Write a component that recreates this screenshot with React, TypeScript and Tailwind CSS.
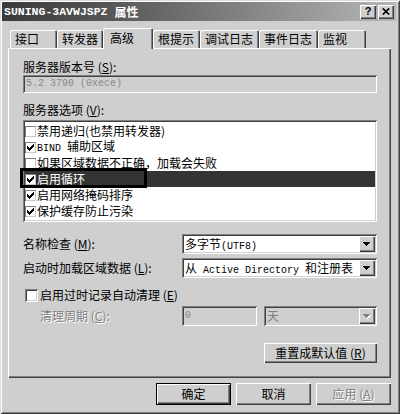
import React from "react";

const Check = () => (
  <svg width="7" height="7" viewBox="0 0 7 7" shapeRendering="crispEdges">
    <path
      fill="#000"
      d="M6 0h1v1h-1z M5 1h2v1h-2z M0 2h1v1h-1z M4 2h3v1h-3z M0 3h2v1h-2z M3 3h3v1h-3z M0 4h5v1h-5z M1 5h3v1h-3z M2 6h1v1h-1z"
    />
  </svg>
);

const Arrow = ({ disabled }: { disabled?: boolean }) => (
  <svg width="8" height="5" viewBox="0 0 8 5" shapeRendering="crispEdges">
    {disabled && <path fill="#ffffff" d="M1 1h7v1h-7z M2 2h5v1h-5z M3 3h3v1h-3z M4 4h1v1h-1z" />}
    <path
      fill={disabled ? "#808080" : "#000000"}
      d="M0 0h7v1h-7z M1 1h5v1h-5z M2 2h3v1h-3z M3 3h1v1h-1z"
    />
  </svg>
);

const Mono = ({ children }: { children: React.ReactNode }) => (
  <span className="font-['Liberation_Mono',monospace] text-[10px] leading-[12px] whitespace-pre">{children}</span>
);

const ListCheck = ({ checked }: { checked: boolean }) => (
  <div className="w-[11px] h-[11px] shrink-0 bg-white flex items-center justify-center shadow-[inset_1px_1px_0_#808080,inset_-1px_-1px_0_#c8c8c8]">
    {checked && <Check />}
  </div>
);

const DropBtn = ({ disabled }: { disabled?: boolean }) => (
  <div className="w-[16px] h-[16px] shrink-0 mr-[2px] bg-[#cfcfcf] flex items-center justify-center shadow-[inset_1px_1px_0_#ffffff,inset_-1px_-1px_0_#404040,inset_-2px_-2px_0_#808080]">
    <Arrow disabled={disabled} />
  </div>
);

const rows: { checked: boolean; label: React.ReactNode; sel?: boolean }[] = [
  { checked: false, label: "禁用递归(也禁用转发器)" },
  { checked: true, label: <><Mono>BIND </Mono>辅助区域</> },
  { checked: false, label: "如果区域数据不正确，加载会失败" },
  { checked: true, label: "启用循环", sel: true },
  { checked: true, label: "启用网络掩码排序" },
  { checked: true, label: "保护缓存防止污染" },
];

const tabs: { label: string; w: string; sel?: boolean }[] = [
  { label: "接口", w: "w-[47px]" },
  { label: "转发器", w: "w-[46px]" },
  { label: "高级", w: "w-[50px]", sel: true },
  { label: "根提示", w: "w-[47px]" },
  { label: "调试日志", w: "w-[59px]" },
  { label: "事件日志", w: "w-[59px]" },
  { label: "监视", w: "w-[48px]" },
];

export default function App() {
  return (
    <div className="w-[400px] h-[414px] bg-[#cfcfcf] flex flex-col pt-[2px] px-[2px] overflow-hidden text-[12px] text-black font-['Noto_Sans_CJK_SC',sans-serif] shadow-[inset_1px_1px_0_#dcdcdc,inset_-1px_-1px_0_#404040,inset_2px_2px_0_#ffffff,inset_-2px_-2px_0_#808080]">
      {/* Title bar */}
      <div className="h-[19px] mr-[2px] shrink-0 flex items-center pl-[2px] pr-[2px] bg-[linear-gradient(to_right,#3a3a3a,#5a5a5a_30%,#b6b6b6)]">
        <span className="text-white font-bold font-['Liberation_Mono',monospace] text-[11.5px] leading-none">SUNING-3AVWJSPZ</span>
        <span className="text-white font-bold ml-[7px] leading-none">属性</span>
        <div className="ml-auto flex items-center gap-[2px]">
          <div className="w-[16px] h-[14px] bg-[#cfcfcf] flex items-center justify-center shadow-[inset_1px_1px_0_#ffffff,inset_-1px_-1px_0_#404040,inset_-2px_-2px_0_#808080]">
            <span className="font-['Liberation_Sans',sans-serif] font-bold text-[11px] leading-none">?</span>
          </div>
          <div className="w-[16px] h-[14px] bg-[#cfcfcf] flex items-center justify-center shadow-[inset_1px_1px_0_#ffffff,inset_-1px_-1px_0_#404040,inset_-2px_-2px_0_#808080]">
            <svg width="8" height="7" viewBox="0 0 8 7">
              <path d="M0.8 0.5 L7.2 6.5 M7.2 0.5 L0.8 6.5" stroke="#000" strokeWidth="1.7" />
            </svg>
          </div>
        </div>
      </div>

      {/* Tabs */}
      <div className="h-[20px] mt-[7px] ml-[8px] flex items-end shrink-0">
        {tabs.map((t) =>
          t.sel ? (
            <div
              key={t.label}
              className={`${t.w} h-[21px] translate-y-[1px] relative z-10 bg-[#cfcfcf] rounded-t-[2px] flex items-center pl-[7px] pb-[2px] shadow-[inset_1px_1px_0_#ffffff,inset_-1px_0_0_#404040,inset_-2px_0_0_#808080]`}
            >
              {t.label}
            </div>
          ) : (
            <div
              key={t.label}
              className={`${t.w} h-[18px] bg-[#cfcfcf] rounded-t-[2px] flex items-center pl-[5px] shadow-[inset_1px_1px_0_#ffffff,inset_-1px_0_0_#404040,inset_-2px_0_0_#808080]`}
            >
              {t.label}
            </div>
          )
        )}
      </div>

      {/* Panel */}
      <div className="ml-[6px] w-[383px] h-[330px] shrink-0 flex flex-col pl-[15px] pr-[14px] shadow-[inset_1px_1px_0_#ffffff,inset_-1px_-1px_0_#404040,inset_-2px_-2px_0_#808080]">
        <div className="h-[16px] leading-[16px] mt-[11px]">
          服务器版本号 (<span className="underline">S</span>):
        </div>
        <div className="h-[18px] flex items-center pl-[3px] text-[#8a8a8a] shadow-[inset_1px_1px_0_#808080,inset_-1px_-1px_0_#ffffff,inset_2px_2px_0_#404040,inset_-2px_-2px_0_#cfcfcf]">
          <Mono>5.2 3790 (0xece)</Mono>
        </div>

        <div className="h-[16px] leading-[16px] mt-[9px]">
          服务器选项 (<span className="underline">V</span>):
        </div>
        <div className="relative h-[102px] mt-[2px] bg-white pt-[3px] px-[2px] shadow-[inset_1px_1px_0_#808080,inset_-1px_-1px_0_#ffffff,inset_2px_2px_0_#404040,inset_-2px_-2px_0_#cfcfcf]">
          {rows.map((r, i) => (
            <div
              key={i}
              className={`h-[16px] flex items-center whitespace-nowrap ${r.sel ? "bg-[#343434] text-white" : ""}`}
            >
              <ListCheck checked={r.checked} />
              <span className="ml-[1px] leading-[14px]">{r.label}</span>
            </div>
          ))}
          <div className="absolute left-[-3px] top-[48px] w-[127px] h-[20px] border-[3px] border-black pointer-events-none" />
        </div>

        <div className="h-[20px] mt-[12px] flex items-center">
          <div className="w-[159px]">
            名称检查 (<span className="underline">M</span>):
          </div>
          <div className="w-[195px] h-[20px] bg-white flex items-center pl-[3px] shadow-[inset_1px_1px_0_#808080,inset_-1px_-1px_0_#ffffff,inset_2px_2px_0_#404040,inset_-2px_-2px_0_#cfcfcf]">
            <div className="flex-1 whitespace-nowrap">
              多字节<Mono>(UTF8)</Mono>
            </div>
            <DropBtn />
          </div>
        </div>

        <div className="h-[20px] mt-[4px] flex items-center">
          <div className="w-[159px]">
            启动时加载区域数据 (<span className="underline">L</span>):
          </div>
          <div className="w-[195px] h-[20px] bg-white flex items-center pl-[3px] shadow-[inset_1px_1px_0_#808080,inset_-1px_-1px_0_#ffffff,inset_2px_2px_0_#404040,inset_-2px_-2px_0_#cfcfcf]">
            <div className="flex-1 whitespace-nowrap">
              从<Mono> Active Directory </Mono>和注册表
            </div>
            <DropBtn />
          </div>
        </div>

        <div className="h-[16px] mt-[9px] flex items-center">
          <div className="w-[13px] h-[13px] ml-[2px] bg-white shadow-[inset_1px_1px_0_#808080,inset_-1px_-1px_0_#ffffff,inset_2px_2px_0_#404040,inset_-2px_-2px_0_#cfcfcf]" />
          <span className="ml-[2px]">
            启用过时记录自动清理 (<span className="underline">E</span>)
          </span>
        </div>

        <div className="h-[20px] mt-[3px] flex items-center">
          <div className="w-[159px] pl-[17px] text-[#808080] [text-shadow:1px_1px_0_#ffffff]">
            清理周期 (<span className="underline">C</span>):
          </div>
          <div className="w-[75px] h-[20px] flex items-center pl-[3px] text-[#8a8a8a] shadow-[inset_1px_1px_0_#808080,inset_-1px_-1px_0_#ffffff,inset_2px_2px_0_#404040,inset_-2px_-2px_0_#cfcfcf]">
            <Mono>0</Mono>
          </div>
          <div className="w-[113px] h-[20px] ml-[7px] flex items-center pl-[3px] shadow-[inset_1px_1px_0_#808080,inset_-1px_-1px_0_#ffffff,inset_2px_2px_0_#404040,inset_-2px_-2px_0_#cfcfcf]">
            <div className="flex-1 text-[#808080]">天</div>
            <DropBtn disabled />
          </div>
        </div>

        <div className="mt-[17px] flex justify-end">
          <div className="w-[113px] h-[20px] flex items-center justify-center shadow-[inset_1px_1px_0_#ffffff,inset_-1px_-1px_0_#404040,inset_-2px_-2px_0_#808080]">
            重置成默认值 (<span className="underline">R</span>)
          </div>
        </div>
      </div>

      {/* Bottom buttons */}
      <div className="h-[22px] mt-[5px] mr-[7px] flex justify-end gap-[5px] shrink-0">
        <div className="w-[75px] h-[22px] border border-black flex items-center justify-center shadow-[inset_1px_1px_0_#ffffff,inset_-1px_-1px_0_#404040,inset_-2px_-2px_0_#808080]">
          确定
        </div>
        <div className="w-[75px] h-[22px] flex items-center justify-center shadow-[inset_1px_1px_0_#ffffff,inset_-1px_-1px_0_#404040,inset_-2px_-2px_0_#808080]">
          取消
        </div>
        <div className="w-[75px] h-[22px] flex items-center justify-center text-[#808080] [text-shadow:1px_1px_0_#ffffff] shadow-[inset_1px_1px_0_#ffffff,inset_-1px_-1px_0_#404040,inset_-2px_-2px_0_#808080]">
          应用 (<span className="underline">A</span>)
        </div>
      </div>
    </div>
  );
}
